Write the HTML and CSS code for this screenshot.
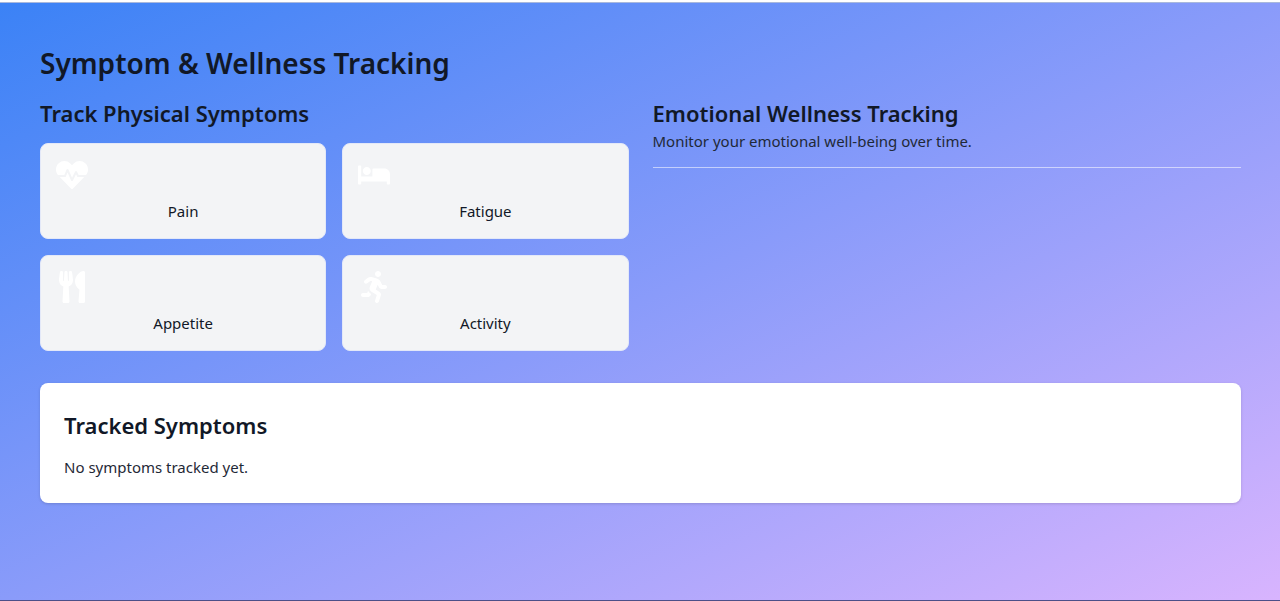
FILE: index.html
```html
<!DOCTYPE html>
<html lang="en">
<head>
<meta charset="utf-8">
<meta name="viewport" content="width=device-width, initial-scale=1">
<title>Symptom &amp; Wellness Tracking</title>
<link rel="stylesheet" href="styles.css">
</head>
<body>
<main class="page">
  <h1 class="page-title">Symptom &amp; Wellness Tracking</h1>
  <div class="columns">
    <section>
      <h2 class="section-title">Track Physical Symptoms</h2>
      <div class="symptoms">
        <button class="symptom" type="button">
          <svg class="icon" viewBox="0 0 512 512" aria-hidden="true"><path d="M320.2 243.8l-49.7 99.4c-6 12.1-23.4 11.7-28.9-.6l-56.9-126.3-30 71.7H60.6l182.5 186.5c7.1 7.3 18.6 7.3 25.7 0L451.4 288H342.3l-22.1-44.2zM473.7 73.9l-2.4-2.5c-51.5-52.6-135.8-52.6-187.4 0L256 100l-27.9-28.5c-51.5-52.7-135.9-52.7-187.4 0l-2.4 2.4C-10.4 123.7-12.5 203 31 256h102.4l35.9-86.2c5.4-12.9 23.6-13.2 29.4-.4l58.2 129.3 49-97.9c5.9-11.8 22.7-11.8 28.6 0l27.6 55.2H481c43.5-53 41.4-132.3-7.3-182.1z"/></svg>
          <span>Pain</span>
        </button>
        <button class="symptom" type="button">
          <svg class="icon" viewBox="0 0 640 512" aria-hidden="true"><path d="M176 256c44.11 0 80-35.89 80-80s-35.89-80-80-80-80 35.89-80 80 35.89 80 80 80zm352-128H304c-8.84 0-16 7.16-16 16v144H64V80c0-8.84-7.16-16-16-16H16C7.16 64 0 71.16 0 80v352c0 8.84 7.16 16 16 16h32c8.84 0 16-7.16 16-16v-48h512v48c0 8.84 7.16 16 16 16h32c8.84 0 16-7.16 16-16V240c0-61.86-50.14-112-112-112z"/></svg>
          <span>Fatigue</span>
        </button>
        <button class="symptom" type="button">
          <svg class="icon" viewBox="0 0 416 512" aria-hidden="true"><path d="M207.9 15.2c.8 4.7 16.1 94.5 16.1 128.8 0 52.3-27.8 89.6-68.9 104.6L168 486.7c.7 13.7-10.2 25.3-24 25.3H80c-13.7 0-24.7-11.5-24-25.3l12.9-238.1C27.7 233.6 0 196.2 0 144 0 109.6 15.3 19.9 16.1 15.2 19.3-5.1 61.4-5.4 64 16.3v141.2c1.3 3.4 15.1 3.2 16 0 1.4-25.3 7.9-139.2 8-141.8 3.3-20.8 44.7-20.8 47.9 0 .2 2.7 6.6 116.5 8 141.8.9 3.2 14.8 3.4 16 0V16.3c2.6-21.6 44.8-21.4 47.9-1.1zm119.2 285.7l-15 185.1c-1.2 14 9.9 26 23.9 26h56c13.3 0 24-10.7 24-24V24c0-13.2-10.7-24-24-24-82.5 0-221.4 178.5-64.9 300.9z"/></svg>
          <span>Appetite</span>
        </button>
        <button class="symptom" type="button">
          <svg class="icon" viewBox="0 0 416 512" aria-hidden="true"><path d="M272 96c26.51 0 48-21.49 48-48S298.51 0 272 0s-48 21.49-48 48 21.49 48 48 48zM113.69 317.47l-14.8 34.52H32c-17.67 0-32 14.33-32 32s14.33 32 32 32h77.45c19.25 0 36.58-11.44 44.11-29.09l8.79-20.52-10.67-6.3c-17.32-10.23-30.06-25.37-37.99-42.61zM384 223.99h-44.03l-26.06-53.25c-12.5-25.55-35.45-44.23-61.78-50.94l-71.08-21.14c-28.3-6.8-57.77-.55-80.84 17.14l-39.67 30.41c-14.03 10.75-16.69 30.83-5.92 44.86s30.84 16.66 44.86 5.92l39.69-30.41c7.67-5.89 17.44-8 25.27-6.14l14.7 4.37-37.46 87.39c-12.62 29.48-1.31 64.01 26.3 80.31l84.98 50.17-27.47 87.73c-5.28 16.86 4.11 34.82 20.97 40.09 3.19 1 6.41 1.48 9.58 1.48 13.61 0 26.23-8.77 30.52-22.45l31.64-101.06c5.91-20.77-2.89-43.08-21.64-54.39l-61.24-36.14 31.31-78.28 20.27 41.43c8 16.34 24.92 26.89 43.11 26.89H384c17.67 0 32-14.33 32-32s-14.33-31.99-32-31.99z"/></svg>
          <span>Activity</span>
        </button>
      </div>
    </section>
    <section>
      <h2 class="section-title section-title-tight">Emotional Wellness Tracking</h2>
      <p class="text">Monitor your emotional well-being over time.</p>
      <hr class="divider">
    </section>
  </div>
  <section class="tracked">
    <h2 class="section-title">Tracked Symptoms</h2>
    <p class="text">No symptoms tracked yet.</p>
  </section>
</main>
</body>
</html>
```
FILE: styles.css
```css
* {
  box-sizing: border-box;
}

body {
  margin: 0;
  min-height: 100vh;
  display: flex;
  flex-direction: column;
  border-top: 2px solid #ffffff;
  font-family: "Segoe UI", "Noto Sans", "Open Sans", sans-serif;
  font-size: 15px;
  line-height: 24px;
  color: #111827;
}

.page {
  flex: 1;
  padding: 40px 39px 40px 40px;
  border-top: 1px solid #a9b8dc;
  border-bottom: 1px solid #4c4f88;
  background: linear-gradient(to bottom right, #3b82f6, #d8b4fe) border-box;
}

.page-title {
  margin: 0 0 14px;
  font-size: 28px;
  line-height: 40px;
  font-weight: 600;
}

.section-title {
  margin: 0 0 14px;
  font-size: 22px;
  line-height: 32px;
  font-weight: 600;
}

.section-title-tight {
  margin-bottom: 0;
}

.columns {
  display: grid;
  grid-template-columns: 1fr 1fr;
  gap: 24px;
}

.symptoms {
  display: grid;
  grid-template-columns: 1fr 1fr;
  gap: 16px;
}

.symptom {
  display: flex;
  flex-direction: column;
  gap: 8px;
  padding: 15px;
  border: 1px solid #e3e8f8;
  border-radius: 8px;
  background: #f3f4f6;
  color: inherit;
  font: inherit;
  text-align: center;
}

.symptom span {
  width: 100%;
}

.icon {
  width: 32px;
  height: 32px;
  fill: #ffffff;
}

.text {
  margin: 0;
  color: #1f2937;
}

.divider {
  margin: 14px 0 0;
  border: 0;
  border-top: 1px solid rgba(255, 255, 255, 0.55);
}

.tracked {
  margin-top: 32px;
  padding: 26px 24px 24px;
  border-radius: 8px;
  background: #ffffff;
  box-shadow: 0 1px 3px rgba(0, 0, 0, 0.15);
}
```
